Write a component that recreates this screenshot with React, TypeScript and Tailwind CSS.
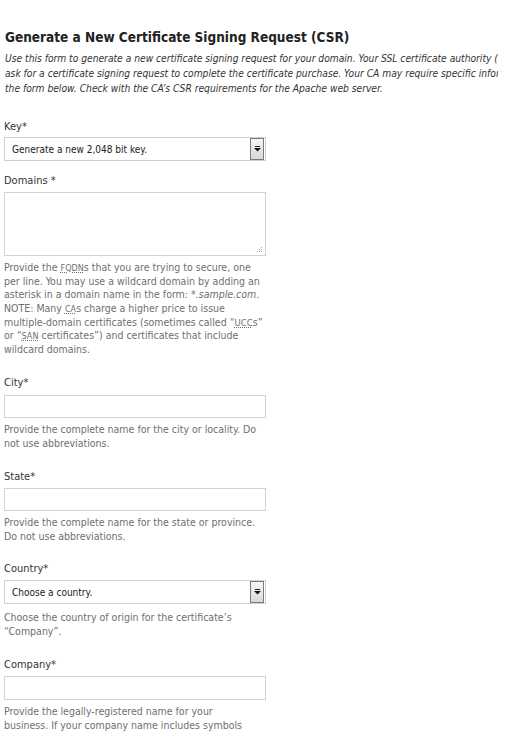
import React from 'react';

const font = { fontFamily: '"DejaVu Sans Condensed", "DejaVu Sans", Tahoma, sans-serif' };

function SelectBox({ value }: { value: string }) {
  return (
    <div className="flex items-center w-[262px] h-full border border-[#cfcfcf] bg-white pl-[7px] pr-[1px]">
      <span className="flex-1 text-[10px] text-[#222]">{value}</span>
      <div className="flex items-center justify-center w-[14px] h-[22px] border border-[#7a7a7a] bg-gradient-to-b from-[#f6f6f6] to-[#d8d8d8]">
        <svg width="7" height="6" viewBox="0 0 7 6">
          <rect x="1" y="0" width="5" height="1" fill="#222" />
          <path d="M0 2h7L3.5 5.5z" fill="#111" />
        </svg>
      </div>
    </div>
  );
}

function TextInput() {
  return <div className="w-[262px] h-full border border-[#d2d2d2] bg-white" />;
}

export default function App() {
  return (
    <main className="min-h-screen bg-white pl-[4px] pt-[27px] overflow-hidden" style={font}>
      <h1 className="pl-[1px] text-[13.5px] leading-[20px] font-bold text-[#222]">
        Generate a New Certificate Signing Request (CSR)
      </h1>

      <div className="mt-[4px] w-[494px] overflow-hidden pl-[1px] text-[10.2px] leading-[15px] italic text-[#333]">
        <div className="whitespace-nowrap">
          Use this form to generate a new certificate signing request for your domain. Your SSL certificate authority (CA) will
        </div>
        <div className="whitespace-nowrap">
          ask for a certificate signing request to complete the certificate purchase. Your CA may require specific information in
        </div>
        <div className="whitespace-nowrap">
          the form below. Check with the CA’s CSR requirements for the Apache web server.
        </div>
      </div>

      {/* Key */}
      <div className="mt-[24px] text-[11px] leading-[14px] text-[#333]">Key*</div>
      <div className="mt-[3px] h-[24px]">
        <SelectBox value="Generate a new 2,048 bit key." />
      </div>

      {/* Domains */}
      <div className="mt-[13px] text-[11px] leading-[14px] text-[#333]">Domains *</div>
      <div className="relative mt-[4px] w-[262px] h-[64px] border border-[#d2d2d2] bg-white">
        <svg className="absolute right-[2px] bottom-[2px]" width="7" height="7" viewBox="0 0 7 7">
          <rect x="5" y="1" width="1" height="1" fill="#aaa" />
          <rect x="3" y="3" width="1" height="1" fill="#aaa" />
          <rect x="5" y="3" width="1" height="1" fill="#aaa" />
          <rect x="1" y="5" width="1" height="1" fill="#aaa" />
          <rect x="3" y="5" width="1" height="1" fill="#aaa" />
          <rect x="5" y="5" width="1" height="1" fill="#aaa" />
        </svg>
      </div>
      <p className="mt-[5px] whitespace-nowrap text-[10.5px] leading-[13.2px] text-[#6f6f6f]">
        Provide the <abbr title="Fully Qualified Domain Name" className="text-[9px]">FQDN</abbr>s that you are trying to secure, one
        <br />
        per line. You may use a wildcard domain by adding an
        <br />
        asterisk in a domain name in the form: *<em>.sample.com</em>.
        <br />
        NOTE: Many <abbr title="Certificate Authority" className="text-[9px]">CA</abbr>s charge a higher price to issue
        <br />
        multiple-domain certificates (sometimes called “<abbr title="Unified Communications Certificate" className="text-[9.5px]">UCC</abbr>s”
        <br />
        or “<abbr title="Subject Alternative Name" className="text-[9px]">SAN</abbr> certificates”) and certificates that include
        <br />
        wildcard domains.
      </p>

      {/* City */}
      <div className="mt-[20px] text-[11px] leading-[14px] text-[#333]">City*</div>
      <div className="mt-[5px] h-[23px]">
        <TextInput />
      </div>
      <p className="mt-[4px] text-[10.5px] leading-[14px] text-[#6f6f6f]">
        Provide the complete name for the city or locality. Do
        <br />
        not use abbreviations.
      </p>

      {/* State */}
      <div className="mt-[20px] text-[11px] leading-[14px] text-[#333]">State*</div>
      <div className="mt-[4px] h-[23px]">
        <TextInput />
      </div>
      <p className="mt-[4px] text-[10.5px] leading-[14px] text-[#6f6f6f]">
        Provide the complete name for the state or province.
        <br />
        Do not use abbreviations.
      </p>

      {/* Country */}
      <div className="mt-[19px] text-[11px] leading-[14px] text-[#333]">Country*</div>
      <div className="mt-[4px] h-[24px]">
        <SelectBox value="Choose a country." />
      </div>
      <p className="mt-[6px] text-[10.5px] leading-[14px] text-[#6f6f6f]">
        Choose the country of origin for the certificate’s
        <br />
        “Company”.
      </p>

      {/* Company */}
      <div className="mt-[20px] text-[11px] leading-[14px] text-[#333]">Company*</div>
      <div className="mt-[4px] h-[24px]">
        <TextInput />
      </div>
      <p className="mt-[4px] text-[10.5px] leading-[14px] text-[#6f6f6f]">
        Provide the legally-registered name for your
        <br />
        business. If your company name includes symbols
      </p>
    </main>
  );
}
